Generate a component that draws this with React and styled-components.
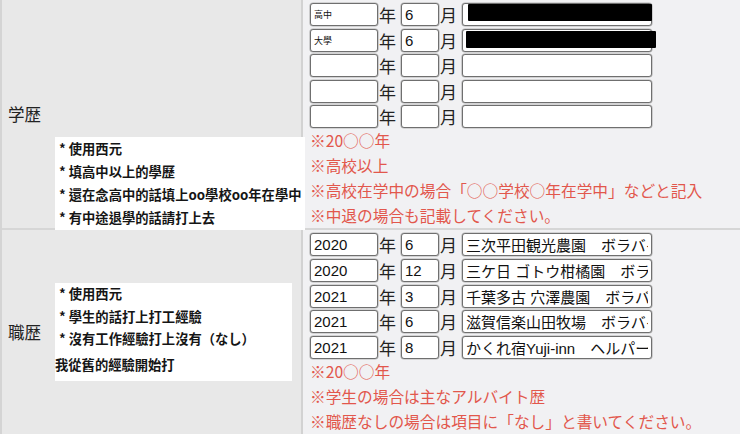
import React from 'react';
import styled, { createGlobalStyle } from 'styled-components';

const GlobalStyle = createGlobalStyle`
  html, body { margin: 0; padding: 0; background: #f1f1f3; }
  body { font-family: "Noto Sans CJK JP", "Noto Sans", sans-serif; overflow: hidden; }
`;

const Table = styled.div`
  display: flex;
  flex-direction: column;
  width: 740px;
  border-left: 2px solid #d4d4d4;
  box-sizing: border-box;
`;

const Row = styled.div`
  display: grid;
  grid-template-columns: 301px 1fr;
  border-bottom: 2px solid #d6d6d6;
`;

const HeadCell = styled.div`
  display: flex;
  align-items: center;
  background: #e8e8e8;
  border-right: 2px solid #d2d2d2;
  padding-left: 6px;
  position: relative;
  z-index: 1;
`;

const Label = styled.div`
  width: 47px;
  flex: none;
  font-size: 16.5px;
  color: #222;
  font-family: "Noto Sans CJK JP", sans-serif;
`;

const NoteBox = styled.div`
  background: #fff;
  width: ${p => p.$w}px;
  flex: none;
  align-self: ${p => (p.$bottom ? 'flex-end' : 'center')};
  margin: ${p => (p.$bottom ? '0 -2px -2px 0' : '0')};
  padding: ${p => p.$pad};
  box-sizing: border-box;
  font-family: "Noto Sans CJK TC", sans-serif;
  font-weight: 700;
  font-size: 13.3px;
  color: #151515;
  white-space: nowrap;
`;

const NoteLine = styled.div`
  line-height: ${p => p.$lh}px;
  padding-left: ${p => (p.$plain ? 0 : 4)}px;
  margin-top: ${p => (p.$plain ? 3 : 0)}px;
`;

const FieldCell = styled.div`
  background: #f1f1f3;
  padding: 3px 6px 0 7px;
  display: flex;
  flex-direction: column;
`;

const Entries = styled.div`
  display: flex;
  flex-direction: column;
  gap: 2.6px;
`;

const Entry = styled.div`
  display: flex;
  align-items: center;
  height: 23px;
`;

const Field = styled.input`
  box-sizing: border-box;
  width: ${p => p.$w}px;
  height: 23px;
  margin: 0;
  padding: 0 3px;
  border: 1px solid #6f6f6f;
  box-shadow: 0 0 0 0.6px #b5b5b5;
  border-radius: 3px;
  background: #fff;
  color: #111;
  font-family: "Liberation Sans", "Noto Sans CJK JP", sans-serif;
  font-size: ${p => (p.$small ? 9 : 15)}px;
  outline: none;
`;

const FieldWrap = styled.div`
  position: relative;
  display: flex;
`;

const Redaction = styled.div`
  position: absolute;
  background: #000;
  border-radius: 1px;
`;

const Unit = styled.span`
  width: 23px;
  flex: none;
  padding-left: 1px;
  box-sizing: border-box;
  font-size: 17px;
  line-height: 23px;
  color: #222;
  font-family: "Noto Sans CJK JP", sans-serif;
`;

const Notes = styled.div`
  color: #e2574c;
  font-size: 15.7px;
  line-height: 25px;
  font-family: "Noto Sans CJK JP", sans-serif;
  white-space: nowrap;
`;

const eduRows = [
  { y: '高中', m: '6', t: '', small: true, redact: { left: 6, top: 1, width: 184, height: 17 } },
  { y: '大學', m: '6', t: '', small: true, redact: { left: 4, top: 2, width: 190, height: 17 } },
  { y: '', m: '', t: '' },
  { y: '', m: '', t: '' },
  { y: '', m: '', t: '' },
];

const workRows = [
  { y: '2020', m: '6', t: '三次平田観光農園　ボラバイト' },
  { y: '2020', m: '12', t: '三ケ日 ゴトウ柑橘園　ボラバイト' },
  { y: '2021', m: '3', t: '千葉多古 穴澤農園　ボラバイト' },
  { y: '2021', m: '6', t: '滋賀信楽山田牧場　ボラバイト' },
  { y: '2021', m: '8', t: 'かくれ宿Yuji-inn　ヘルパー' },
];

function EntryList({ rows }) {
  return (
    <Entries>
      {rows.map((r, i) => (
        <Entry key={i}>
          <Field $w={68} $small={r.small} defaultValue={r.y} readOnly />
          <Unit>年</Unit>
          <Field $w={38} defaultValue={r.m} readOnly />
          <Unit>月</Unit>
          <FieldWrap>
            <Field $w={190} defaultValue={r.t} readOnly />
            {r.redact && (
              <Redaction
                style={{
                  left: r.redact.left,
                  top: r.redact.top,
                  width: r.redact.width,
                  height: r.redact.height,
                }}
              />
            )}
          </FieldWrap>
        </Entry>
      ))}
    </Entries>
  );
}

export default function App() {
  return (
    <>
      <GlobalStyle />
      <Table>
        <Row>
          <HeadCell>
            <Label>学歴</Label>
            <NoteBox $w={250} $bottom $pad="0 0 1px 0">
              <NoteLine $lh={23}>* 使用西元</NoteLine>
              <NoteLine $lh={23}>* 填高中以上的學歷</NoteLine>
              <NoteLine $lh={23}>* 還在念高中的話填上oo學校oo年在學中</NoteLine>
              <NoteLine $lh={23}>* 有中途退學的話請打上去</NoteLine>
            </NoteBox>
          </HeadCell>
          <FieldCell>
            <EntryList rows={eduRows} />
            <Notes>
              <div>※20○○年</div>
              <div>※高校以上</div>
              <div>※高校在学中の場合「○○学校○年在学中」などと記入</div>
              <div>※中退の場合も記載してください。</div>
            </Notes>
          </FieldCell>
        </Row>
        <Row>
          <HeadCell>
            <Label>職歴</Label>
            <NoteBox $w={237} $pad="0 0 5px 0">
              <NoteLine $lh={22.5}>* 使用西元</NoteLine>
              <NoteLine $lh={22.5}>* 學生的話打上打工經驗</NoteLine>
              <NoteLine $lh={22.5}>* 沒有工作經驗打上沒有（なし）</NoteLine>
              <NoteLine $lh={22.5} $plain>我從舊的經驗開始打</NoteLine>
            </NoteBox>
          </HeadCell>
          <FieldCell>
            <EntryList rows={workRows} />
            <Notes>
              <div>※20○○年</div>
              <div>※学生の場合は主なアルバイト歴</div>
              <div>※職歴なしの場合は項目に「なし」と書いてください。</div>
            </Notes>
          </FieldCell>
        </Row>
      </Table>
    </>
  );
}
